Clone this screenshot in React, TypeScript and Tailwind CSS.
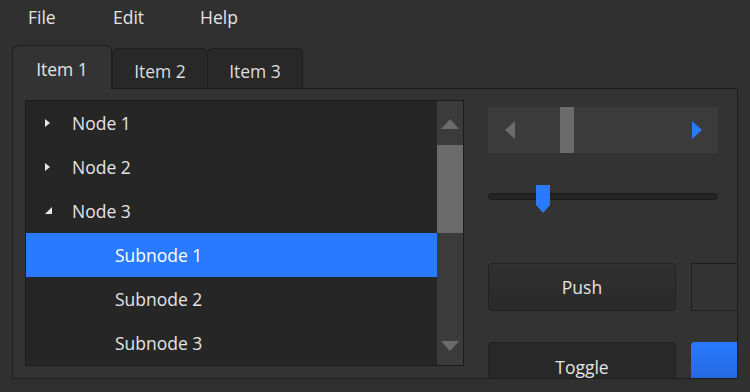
import React from "react";

const Tri = ({ d, w, h, color, className }: { d: string; w: number; h: number; color: string; className?: string }) => (
  <svg width={w} height={h} viewBox={`0 0 ${w} ${h}`} className={className}>
    <path d={d} fill={color} />
  </svg>
);

const rows = [
  { label: "Node 1", arrow: "right", indent: false },
  { label: "Node 2", arrow: "right", indent: false },
  { label: "Node 3", arrow: "down", indent: false },
  { label: "Subnode 1", arrow: "", indent: true, sel: true },
  { label: "Subnode 2", arrow: "", indent: true },
  { label: "Subnode 3", arrow: "", indent: true },
];

export default function App() {
  return (
    <div className="w-[750px] h-[392px] bg-[#303030] overflow-hidden text-[#e4e4e4] text-[17.5px] leading-none" style={{ fontFamily: '"Open Sans", "Noto Sans", sans-serif' }}>
      {/* menu bar */}
      <div className="h-[36px] flex items-center pl-[28px]">
        <div className="w-[85px]">File</div>
        <div className="w-[87px]">Edit</div>
        <div>Help</div>
      </div>
      {/* tab widget */}
      <div className="pl-[12px] pt-[9px]">
        <div className="flex items-end h-[43px]">
          <div className="relative z-10 w-[100px] h-[44px] -mb-[1px] rounded-t-[6px] border border-b-0 border-[#1e1e1e] bg-[#333333] flex items-center justify-center pt-[5px]">
            Item 1
          </div>
          <div className="w-[96px] h-[40px] rounded-t-[6px] border border-b-0 border-[#1e1e1e] bg-[#282828] flex items-center justify-center pt-[7px] text-[#dedede]">
            Item 2
          </div>
          <div className="w-[96px] h-[40px] -ml-[1px] rounded-t-[6px] border border-b-0 border-[#1e1e1e] bg-[#282828] flex items-center justify-center pt-[7px] text-[#dedede]">
            Item 3
          </div>
        </div>
        <div className="w-[726px] h-[291px] border border-[#1e1e1e] bg-[#333333] overflow-hidden flex items-start pl-[12px] pt-[11px]">
          {/* tree view */}
          <div className="shrink-0 w-[439px] h-[266px] border border-[#1c1c1c] bg-[#262626] flex">
            <div className="w-[411px] flex flex-col">
              {rows.map((r) => (
                <div
                  key={r.label}
                  className={`shrink-0 h-[44px] flex items-center pt-[2px] ${r.sel ? "bg-[#2a7aff] text-white" : ""} ${r.indent ? "pl-[89px]" : "pl-[19px]"}`}
                >
                  {!r.indent && (
                    <div className="w-[27px] flex items-center">
                      {r.arrow === "right" ? (
                        <Tri w={5} h={8} d="M0 0 L5 4 L0 8 Z" color="#e8e8e8" className="mt-[-2px]" />
                      ) : (
                        <Tri w={7} h={7} d="M7 0 L7 7 L0 7 Z" color="#e8e8e8" className="mt-[-3px]" />
                      )}
                    </div>
                  )}
                  <div>{r.label}</div>
                </div>
              ))}
            </div>
            {/* vertical scrollbar */}
            <div className="w-[26px] bg-[#3b3b3b] flex flex-col">
              <div className="shrink-0 h-[44px] flex items-start justify-center pt-[18px]">
                <Tri w={18} h={10} d="M9 0 L18 10 L0 10 Z" color="#6b6b6b" />
              </div>
              <div className="shrink-0 h-[88px] bg-[#6b6b6b]" />
              <div className="flex-1 flex items-end justify-center pb-[14px]">
                <Tri w={18} h={10} d="M0 0 L18 0 L9 10 Z" color="#6b6b6b" />
              </div>
            </div>
          </div>
          {/* right column */}
          <div className="shrink-0 ml-[24px] flex flex-col">
            {/* horizontal scrollbar */}
            <div className="shrink-0 mt-[7px] w-[230px] h-[46px] bg-[#3b3b3b] flex items-center">
              <Tri w={10} h={18} d="M10 0 L10 18 L0 9 Z" color="#6b6b6b" className="ml-[17px]" />
              <div className="ml-[45px] w-[14px] h-[46px] bg-[#6b6b6b]" />
              <div className="flex-1" />
              <Tri w={10} h={18} d="M0 0 L10 9 L0 18 Z" color="#2a7aff" className="mr-[16px]" />
            </div>
            {/* slider */}
            <div className="shrink-0 mt-[32px] w-[230px] h-[28px] relative pt-[8px]">
              <div className="w-full h-[7px] rounded-full bg-[#242424] border border-[#1c1c1c]" />
              <Tri w={14} h={28} d="M0 0 L14 0 L14 20 L7 28 L0 20 Z" color="#2a7aff" className="absolute left-[48px] top-0" />
            </div>
            {/* buttons */}
            <div className="shrink-0 mt-[50px] flex gap-[15px]">
              <div className="shrink-0 w-[188px] h-[48px] rounded-[4px] border border-[#222222] bg-gradient-to-b from-[#303030] to-[#2a2a2a] flex items-center justify-center pt-[2px]">
                Push
              </div>
              <div className="shrink-0 w-[188px] h-[48px] border border-[#1e1e1e] bg-[#333333]" />
            </div>
            <div className="shrink-0 mt-[31px] flex gap-[15px]">
              <div className="shrink-0 w-[188px] h-[48px] rounded-[4px] border border-[#222222] bg-[#282828] flex items-start justify-center pt-[16px]">
                Toggle
              </div>
              <div className="shrink-0 w-[188px] h-[48px] rounded-[4px] bg-gradient-to-b from-[#2a7aff] to-[#2464d6]" />
            </div>
          </div>
        </div>
      </div>
    </div>
  );
}
